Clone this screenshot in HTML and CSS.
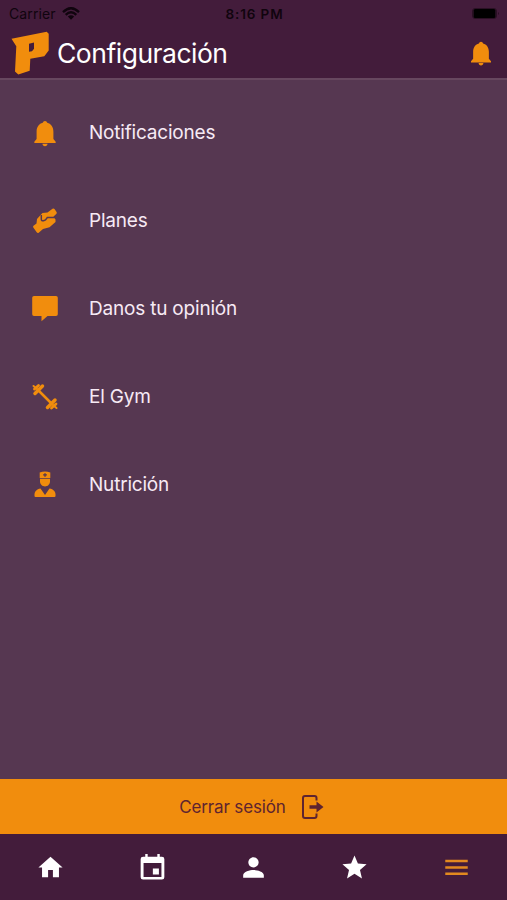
FILE: index.html
```html
<!DOCTYPE html>
<html lang="es">
<head>
    <meta charset="UTF-8">
    <title>Configuración</title>
    <link rel="stylesheet" href="styles.css">
</head>
<body>
    <header class="header">
        <div class="status-bar">
            <div class="carrier">
                <span>Carrier</span>
                <svg class="wifi" viewBox="0 0 18 13">
                    <path d="M1 5.1Q9-2.7 17 5.1M3.7 7.9Q9 2.7 14.3 7.9" fill="none" stroke="currentColor" stroke-width="2.3"/>
                    <path d="M5.8 9.5Q9 6.8 12.2 9.5L9 12.7z" fill="currentColor"/>
                </svg>
            </div>
            <span class="time">8:16 PM</span>
            <div class="battery-box">
                <svg class="battery" viewBox="0 0 28 11">
                    <rect x="0.5" y="0.5" width="24" height="10" rx="2.5" fill="none" stroke="#2a1024"/>
                    <rect x="1.5" y="1" width="22" height="9" rx="1.5"/>
                    <path d="M26 4q2 1.5 0 3z" fill="#2a1024"/>
                </svg>
            </div>
        </div>
        <div class="title-bar">
            <svg class="logo" viewBox="0 0 40 44">
                <path fill-rule="evenodd" d="M1.500 7.800L36.700.7L38.700 2.800V19.500L34.300 25.200L20.300 27.800L19.700 39.800L8.300 43.500L5 40.500L6.300 15.200zM19 12.800V20.700L22 20.300L24 17.800V11.600z"/>
            </svg>
            <h1 class="title">Configuración</h1>
            <svg class="bell" viewBox="0 0 24 24">
                <path d="M12 21.900c1.100 0 1.900-.7 1.900-1.900h-3.800c0 1.200.8 1.900 1.900 1.900zM18.300 16.500V11c0-3.600-1.900-5.900-4.600-6.600a1.750 1.750 0 0 0-3.400 0C7.600 5.100 5.700 7.400 5.700 11v5.500L4 18.500v1h16v-1z"/>
            </svg>
        </div>
    </header>

    <main class="menu">
        <a class="item">
            <svg class="icon" viewBox="0 0 24 24">
                <path d="M12 21.900c1.100 0 1.900-.7 1.900-1.900h-3.800c0 1.200.8 1.900 1.900 1.900zM18.300 16.500V11c0-3.600-1.900-5.900-4.600-6.600a1.750 1.750 0 0 0-3.400 0C7.600 5.100 5.700 7.400 5.700 11v5.500L4 18.500v1h16v-1z"/>
            </svg>
            <span>Notificaciones</span>
        </a>
        <a class="item">
            <!-- manos -->
            <svg class="icon" viewBox="0 0 32 32">
                <path d="M4.500 20.800L7.500 18.500L8 14L12 9.500L13.500 8L18.500 7.500L23.500 3.700Q24.800 3 25.700 4.300L27.700 7.200Q28.200 8.300 27 9.300L24.500 11.500L26.500 14.500V17L20.500 22.300L14 24L9.700 27.700Q8.500 28.300 7.700 27.200L4.300 22.600Q3.700 21.500 4.500 20.800z"/>
                <path class="gap" d="M12.300 10V14.200Q12.500 16.200 14.500 15.800L16.500 14.900L18.300 12.600H27"/>
            </svg>
            <span>Planes</span>
        </a>
        <a class="item">
            <svg class="icon" viewBox="0 0 32 32">
                <path d="M5 3h22a1.800 1.800 0 0 1 1.800 1.800v16.400a1.800 1.800 0 0 1-1.800 1.800h-8.500l-6 5.200V23H5a1.800 1.800 0 0 1-1.800-1.800V4.800A1.800 1.800 0 0 1 5 3z"/>
            </svg>
            <span>Danos tu opinión</span>
        </a>
        <a class="item">
            <!-- pesa -->
            <svg class="icon" viewBox="0 0 32 32">
                <g fill="none" stroke="currentColor" stroke-linecap="round">
                    <path stroke-width="2.500" d="M9 9L23 23"/>
                    <path stroke-width="3.500" d="M6 12.500L13.500 5M18.500 26.500L26 19"/>
                    <path stroke-width="2.800" d="M5.500 8L9.500 4.500M22.500 27L27 23"/>
                    <path stroke-width="2" d="M4.500 5L8 8M24 24L27.500 27"/>
                </g>
            </svg>
            <span>El Gym</span>
        </a>
        <a class="item">
            <svg class="icon" viewBox="0 0 32 32">
                <path fill-rule="evenodd" d="M10.700 3.500Q16 1.500 21.300 3.500V9H10.700zM15.300 4.200v1.100h-1.200v1.300h1.200v1.200h1.400V6.600h1.200V5.300h-1.200V4.200z"/>
                <path d="M11 9.800h10v2.500c0 3.200-2.400 5.200-5 5.200s-5-2-5-5.200z"/>
                <path d="M11.500 19.500L16 26L20.500 19.500C24.500 20.200 26.500 22.800 26.500 25.500V27q0 1-1 1H6.500q-1 0-1-1V25.500C5.500 22.800 7.500 20.200 11.500 19.500z"/>
            </svg>
            <span>Nutrición</span>
        </a>
    </main>

    <button class="logout">
        <span>Cerrar sesión</span>
        <svg class="exit" viewBox="0 0 24 26">
            <path d="M15.500 6.500V4q0-2-2-2H4Q2 2 2 4v18q0 2 2 2h9.500q2 0 2-2v-2.500" fill="none" stroke="currentColor" stroke-width="2"/>
            <path d="M8.500 11.200H15.500V7.500L22.500 13L15.500 18.500V14.800H8.500z" fill="currentColor"/>
        </svg>
    </button>

    <nav class="tabs">
        <a class="tab">
            <svg viewBox="0 0 24 24"><path d="M10 20v-6h4v6h5v-8h3L12 3 2 12h3v8z"/></svg>
        </a>
        <a class="tab">
            <svg viewBox="0 0 24 24"><path fill-rule="evenodd" d="M6 .9h2V3h8V.9h2V3h1.800a2 2 0 0 1 2 2v15a2 2 0 0 1-2 2H4.200a2 2 0 0 1-2-2V5a2 2 0 0 1 2-2H6zM4.600 8.300v11.500h14.800V8.300zM12.300 12.800h5v5h-5z"/></svg>
        </a>
        <a class="tab">
            <svg class="person" viewBox="0 0 24 24"><path d="M12 12c2.200 0 4-1.800 4-4s-1.800-4-4-4-4 1.800-4 4 1.800 4 4 4zm0 2c-2.700 0-8 1.300-8 4v2h16v-2c0-2.700-5.300-4-8-4z"/></svg>
        </a>
        <a class="tab">
            <svg viewBox="0 0 24 24"><path d="M12 17.270L18.180 21l-1.640-7.030L22 9.240l-7.190-.61L12 2 9.190 8.630 2 9.240l5.460 4.730L5.820 21z"/></svg>
        </a>
        <a class="tab active">
            <svg viewBox="0 0 24 24"><path d="M2.700 5.500h18.600v2.100H2.700zM2.700 10.900h18.600V13H2.700zM2.700 16.200h18.600v2.100H2.700z"/></svg>
        </a>
    </nav>
</body>
</html>
```

FILE: styles.css
```css
* {
    box-sizing: border-box;
}

body {
    margin: 0;
    height: 900px;
    display: flex;
    flex-direction: column;
    overflow: hidden;
    background-color: #563751;
    font-family: Inter, "Liberation Sans", sans-serif;
}

svg {
    display: block;
    flex-shrink: 0;
}

/* Header */
.header {
    height: 80px;
    background-color: #431c3b;
    border-bottom: 2px solid #67475f;
}

.status-bar {
    display: grid;
    grid-template-columns: 1fr auto 1fr;
    align-items: center;
    height: 27px;
    padding: 0 7px 0 9px;
    color: #10040e;
    font-size: 14px;
}

.carrier {
    display: flex;
    align-items: center;
    gap: 6px;
    letter-spacing: 0.1px;
}

.wifi {
    width: 18px;
    height: 13px;
}

.time {
    font-size: 13.5px;
    font-weight: 600;
    letter-spacing: 0.9px;
}

.battery-box {
    display: flex;
    justify-content: flex-end;
}

.battery {
    width: 28px;
    height: 11px;
}

.title-bar {
    display: flex;
    align-items: center;
    height: 51px;
    padding: 0 11.5px 0 10px;
    color: #f18d0d;
}

.logo {
    width: 40px;
    height: 44px;
    fill: currentColor;
}

.title {
    flex: 1;
    margin: 0 0 0 7px;
    color: #fff;
    font-size: 26.500px;
    font-weight: 400;
    line-height: 50px;
    letter-spacing: -0.5px;
}

.bell {
    width: 30px;
    height: 30px;
    fill: currentColor;
}

/* Menu */
.menu {
    flex: 1;
    padding-top: 9px;
}

.item {
    display: flex;
    align-items: center;
    gap: 28.5px;
    height: 88px;
    padding-left: 28.5px;
    color: #f7eaf5;
    font-size: 19px;
    letter-spacing: -0.2px;
}

.item span {
    padding-bottom: 1px;
}

.icon {
    width: 32px;
    height: 32px;
    color: #f18d0d;
    fill: currentColor;
}

.gap {
    fill: none;
    stroke: #563751;
    stroke-width: 1.5;
}

.logout {
    display: flex;
    align-items: center;
    justify-content: center;
    gap: 15px;
    height: 55px;
    padding: 0 3px 0 0;
    border: none;
    background-color: #f18d0d;
    color: #5e2430;
    font-family: inherit;
    font-size: 17px;
    letter-spacing: -0.15px;
}

.exit {
    width: 24px;
    height: 26px;
}

/* Bottom tabs */
.tabs {
    display: flex;
    height: 66px;
    background-color: #431c3b;
}

.tab {
    flex: 1;
    display: flex;
    align-items: center;
    justify-content: center;
    color: #fff;
}

.tab svg {
    width: 29px;
    height: 29px;
    fill: currentColor;
}

.tab .person {
    width: 31px;
    height: 31px;
}

.tab.active {
    color: #e2891f;
}
```
